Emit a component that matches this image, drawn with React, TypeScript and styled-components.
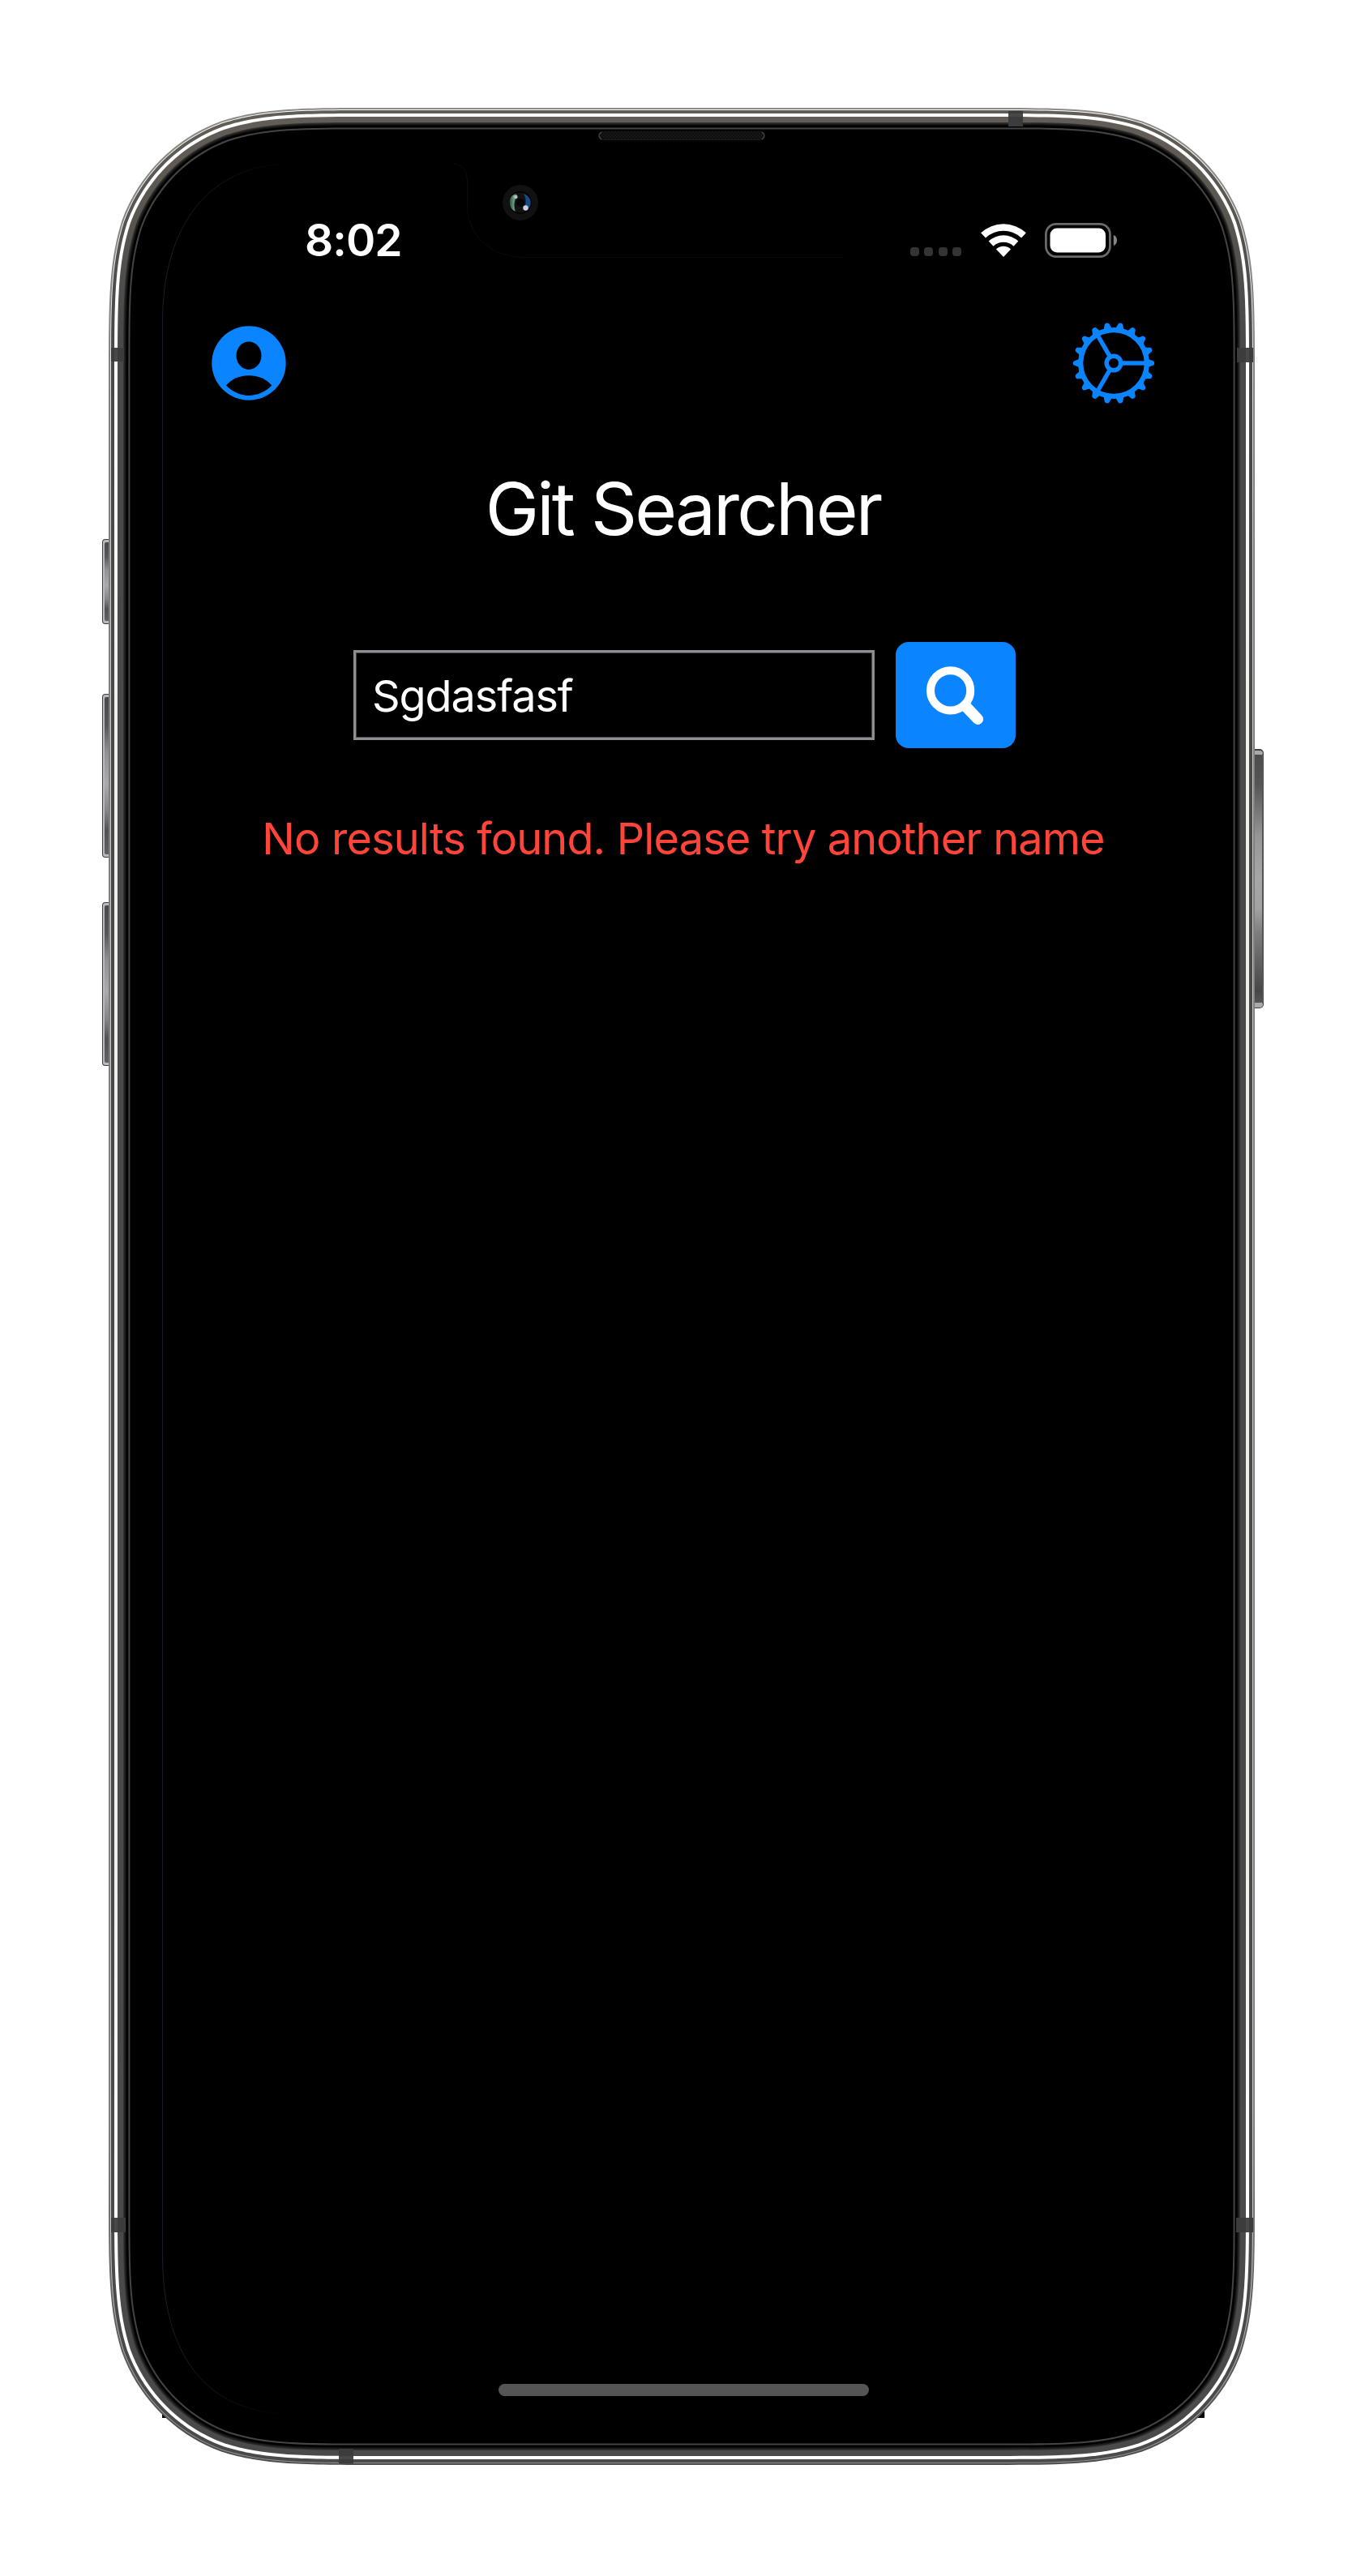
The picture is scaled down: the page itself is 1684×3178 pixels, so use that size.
import React from "react";
import styled, { createGlobalStyle } from "styled-components";

const BLUE = "#0a84ff";

const GlobalStyle = createGlobalStyle`
  html, body { margin: 0; padding: 0; background: #ffffff; }
  * { box-sizing: border-box; }
`;

const Stage = styled.main`
  display: grid;
  width: 1684px;
  height: 3178px;
  overflow: hidden;
  background: #ffffff;
  font-family: Inter, "Liberation Sans", sans-serif;
  & > * { grid-area: 1 / 1; }
`;

const Frame = styled.svg`
  display: block;
`;

const Screen = styled.section`
  z-index: 1;
  display: flex;
  flex-direction: column;
  width: 1286px;
  margin: 262px 0 0 200px;
  height: 2721px;
`;

const StatusBar = styled.div`
  display: flex;
  align-items: center;
  justify-content: space-between;
  height: 69px;
  padding: 0 107px 0 176px;
`;

const Clock = styled.span`
  color: #ffffff;
  font-size: 55px;
  font-weight: 600;
  line-height: 69px;
  letter-spacing: -0.9px;
`;

const StatusIcons = styled.div`
  display: flex;
  align-items: center;
  gap: 23px;
`;

const Dots = styled.div`
  display: flex;
  gap: 6.4px;
  margin-right: 1px;
  padding-top: 28px;
`;

const Dot = styled.i`
  width: 11px;
  height: 11px;
  border-radius: 4px;
  background: #343434;
`;

const Toolbar = styled.nav`
  display: flex;
  align-items: center;
  justify-content: space-between;
  height: 104px;
  margin-top: 65px;
  padding: 0 60.4px 0 61px;
`;

const IconButton = styled.button`
  display: flex;
  padding: 0;
  border: 0;
  background: none;
`;

const Title = styled.h1`
  margin: 74px 0 0;
  padding-right: 1px;
  color: #ffffff;
  font-size: 89px;
  font-weight: 400;
  line-height: 108px;
  letter-spacing: -2.95px;
  text-align: center;
  white-space: nowrap;
`;

const SearchRow = styled.form`
  display: flex;
  align-items: center;
  gap: 26px;
  height: 131px;
  margin: 110px 0 0 236px;
`;

const SearchInput = styled.input`
  width: 643px;
  height: 111px;
  padding: 2px 0 0 20px;
  border: 3px solid #8e8e93;
  border-radius: 0;
  outline: none;
  background: #000000;
  box-shadow: inset 0 0 0 1px #47474a;
  color: #ffffff;
  font: 400 54px Inter, "Liberation Sans", sans-serif;
  letter-spacing: -1.1px;
`;

const SearchButton = styled.button`
  display: flex;
  align-items: center;
  justify-content: center;
  width: 148px;
  height: 131px;
  padding: 0;
  border: 0;
  border-radius: 16px;
  background: ${BLUE};
`;

const ErrorText = styled.p`
  margin: 80px 0 0;
  color: #ff453a;
  font-size: 54px;
  font-weight: 400;
  line-height: 64px;
  letter-spacing: -0.85px;
  text-align: center;
  white-space: nowrap;
`;

const HomeIndicator = styled.div`
  width: 457px;
  height: 15px;
  margin: auto auto 27px;
  border-radius: 8px;
  background: #555555;
`;

/* Continuous-curvature rounded rectangle, inset from the phone's outline. */
function shell(inset: number): string {
  const l = 134 + inset;
  const t = 133 + inset;
  const r = 1548 - inset;
  const b = 3041 - inset;
  const R = 220 - inset;
  const A = 1.52866 * R;
  const B = 1.08849 * R;
  const C = 0.86841 * R;
  const D = 0.63149 * R;
  const E = 0.07491 * R;
  const F = 0.37282 * R;
  const G = 0.16906 * R;
  return [
    `M${l + A} ${t}`,
    `L${r - A} ${t}`,
    `C${r - B} ${t} ${r - C} ${t} ${r - D} ${t + E}`,
    `C${r - F} ${t + G} ${r - G} ${t + F} ${r - E} ${t + D}`,
    `C${r} ${t + C} ${r} ${t + B} ${r} ${t + A}`,
    `L${r} ${b - A}`,
    `C${r} ${b - B} ${r} ${b - C} ${r - E} ${b - D}`,
    `C${r - G} ${b - F} ${r - F} ${b - G} ${r - D} ${b - E}`,
    `C${r - C} ${b} ${r - B} ${b} ${r - A} ${b}`,
    `L${l + A} ${b}`,
    `C${l + B} ${b} ${l + C} ${b} ${l + D} ${b - E}`,
    `C${l + F} ${b - G} ${l + G} ${b - F} ${l + E} ${b - D}`,
    `C${l} ${b - C} ${l} ${b - B} ${l} ${b - A}`,
    `L${l} ${t + A}`,
    `C${l} ${t + B} ${l} ${t + C} ${l + E} ${t + D}`,
    `C${l + G} ${t + F} ${l + F} ${t + G} ${l + D} ${t + E}`,
    `C${l + C} ${t} ${l + B} ${t} ${l + A} ${t}Z`,
  ].join(" ");
}

const layers: [number, string][] = [
  [0, "url(#rim)"],
  [2, "url(#glint)"],
  [3, "url(#steel)"],
  [7, "url(#shine)"],
  [11, "url(#steel)"],
  [18, "#343331"],
  [19, "#262625"],
  [20, "#181818"],
  [21, "#0c0c0c"],
  [22, "#000000"],
  [24.4, "#444444"],
  [26.4, "#000000"],
];

const bands: [number, number, number, number][] = [
  [137, 429, 16, 17],
  [1526, 429, 20, 18],
  [137, 2736, 18, 18],
  [1525, 2736, 21, 18],
  [1244, 137, 18, 19],
  [418, 3021, 18, 18],
];

const sideKeys: [number, number][] = [
  [665, 105],
  [856, 202],
  [1113, 202],
];

function PhoneFrame() {
  return (
    <Frame width="1684" height="3178" viewBox="0 0 1684 3178" aria-hidden="true">
      <defs>
        <linearGradient id="rim" x1="0" y1="0" x2="0" y2="1">
          <stop offset="0" stopColor="#8b8a89" />
          <stop offset="0.15" stopColor="#7d8080" />
          <stop offset="0.85" stopColor="#7d8080" />
          <stop offset="1" stopColor="#4c4c4c" />
        </linearGradient>
        <linearGradient id="glint" x1="0" y1="0" x2="0" y2="1">
          <stop offset="0" stopColor="#ffffff" />
          <stop offset="0.2" stopColor="#c9cac8" />
          <stop offset="0.9" stopColor="#c9cac8" />
          <stop offset="1" stopColor="#8c8c8c" />
        </linearGradient>
        <linearGradient id="steel" x1="0" y1="0" x2="0" y2="1">
          <stop offset="0" stopColor="#635d57" />
          <stop offset="0.04" stopColor="#5a5650" />
          <stop offset="0.09" stopColor="#494949" />
          <stop offset="1" stopColor="#4a4a4a" />
        </linearGradient>
        <linearGradient id="shine" x1="0" y1="0" x2="0" y2="1">
          <stop offset="0" stopColor="#ffffff" />
          <stop offset="0.12" stopColor="#ffffff" />
          <stop offset="0.25" stopColor="#f0efea" />
          <stop offset="0.75" stopColor="#f0efea" />
          <stop offset="0.9" stopColor="#ffffff" />
        </linearGradient>
        <linearGradient id="key" x1="0" y1="0" x2="0" y2="1">
          <stop offset="0" stopColor="#48494c" />
          <stop offset="0.18" stopColor="#55565a" />
          <stop offset="0.35" stopColor="#909194" />
          <stop offset="0.55" stopColor="#a9aaad" />
          <stop offset="0.72" stopColor="#85868a" />
          <stop offset="0.85" stopColor="#505154" />
          <stop offset="1" stopColor="#606164" />
        </linearGradient>
        <linearGradient id="power" x1="0" y1="0" x2="0" y2="1">
          <stop offset="0" stopColor="#4c4c4c" />
          <stop offset="0.12" stopColor="#555555" />
          <stop offset="0.33" stopColor="#979797" />
          <stop offset="0.5" stopColor="#a6a6a6" />
          <stop offset="0.62" stopColor="#a2a2a2" />
          <stop offset="0.72" stopColor="#7d7d7d" />
          <stop offset="0.95" stopColor="#474747" />
          <stop offset="1" stopColor="#555555" />
        </linearGradient>
        <linearGradient id="edge" gradientUnits="userSpaceOnUse" x1="200" y1="0" x2="360" y2="0">
          <stop offset="0" stopColor="#1c1d2a" />
          <stop offset="0.4" stopColor="#131419" />
          <stop offset="1" stopColor="#000000" />
        </linearGradient>
        <linearGradient id="green" x1="0" y1="0" x2="1" y2="0">
          <stop offset="0" stopColor="#25493a" />
          <stop offset="0.5" stopColor="#6f9b83" />
          <stop offset="1" stopColor="#1a2e26" />
        </linearGradient>
        <pattern id="mesh" width="4" height="4" patternUnits="userSpaceOnUse">
          <rect width="4" height="4" fill="#0d0d0d" />
          <path d="M0 0h2v2h2v2h-2v-2h-2z" fill="#181818" />
        </pattern>
      </defs>

      {sideKeys.map(([y, h]) => (
        <g key={y}>
          <rect x="126" y={y} width="14" height={h} rx="4" fill="#3e3f3f" />
          <rect x="127" y={y + 1} width="12" height={h - 2} rx="3" fill="#b9bab9" />
          <rect x="129" y={y + 4} width="10" height={h - 8} rx="2" fill="url(#key)" />
        </g>
      ))}
      <rect x="1542" y="924" width="17" height="320" rx="5" fill="#424342" />
      <rect x="1542" y="926" width="16" height="317" rx="4" fill="#a8a9a8" />
      <rect x="1542" y="931" width="15.500" height="306" rx="2" fill="url(#power)" />
      <rect x="1557" y="930" width="2" height="308" fill="#555555" />

      <path d="M200 2970h10v13h-10zM1476 2970h10v13h-10z" fill="#000000" />
      {layers.map(([inset, fill]) => (
        <path key={inset} d={shell(inset)} fill={fill} />
      ))}
      {bands.map(([x, y, w, h]) => (
        <rect key={`${x}-${y}`} x={x} y={y} width={w} height={h} fill="#3c3c3c" />
      ))}
      <path d="M141 429h4v17h-4zM141 2736h4v18h-4zM1537 429h4v18h-4zM1537 2736h4v18h-4zM1244 140h18v4h-18zM418 3030h18v4h-18z" fill="#484848" />

      <path
        d="M360 202C260 202 200 275 200.500 400V2780C200 2900 250 2978 360 2978"
        fill="none"
        stroke="url(#edge)"
        strokeWidth="1"
      />
      <path
        d="M560 202Q576 204 576.500 222V252C576 290 605 317 646 317.500H1040"
        fill="none"
        stroke="#0b0b0b"
        strokeWidth="1"
      />

      <rect x="738.500" y="162" width="205" height="10.500" rx="5.250" fill="url(#mesh)" stroke="#171717" />
      <path d="M742 163Q736 167.500 742 172M940 163Q946 167.500 940 172" fill="none" stroke="#484848" strokeWidth="1.200" />

      <circle cx="642" cy="250" r="22" fill="#111111" />
      <circle cx="642" cy="250" r="14" fill="#030303" />
      <circle cx="642" cy="250" r="12.500" fill="#131112" />
      <path d="M637 239C626 241 626 257 636 261C633 253 635 245 639 242Z" fill="url(#green)" />
      <path d="M646 239C657 243 657 255 649 260C645 257 652 249 646 239Z" fill="#174a88" />
      <circle cx="642" cy="250" r="5" fill="#050505" />
      <circle cx="636.300" cy="243" r="2.300" fill="#b4c3bc" />
      <circle cx="648.500" cy="256.500" r="3.200" fill="#cfcfe2" />
    </Frame>
  );
}

function wedge(outer: number, inner: number): string {
  const k = 0.685;
  const c = 0.7285;
  const p = (r: number, side: number) => `${28 + side * r * k} ${41 - r * c}`;
  if (inner === 0) return `M28 41L${p(outer, -1)}A${outer} ${outer} 0 0 1 ${p(outer, 1)}Z`;
  return `M${p(outer, -1)}A${outer} ${outer} 0 0 1 ${p(outer, 1)}L${p(inner, 1)}A${inner} ${inner} 0 0 0 ${p(inner, -1)}Z`;
}

function WifiIcon() {
  return (
    <svg width="56" height="42" viewBox="0 0 56 42" fill="#ffffff">
      <path d={wedge(40.7, 32.2)} />
      <path d={wedge(26.7, 18.3)} />
      <path d={wedge(13.2, 0)} />
    </svg>
  );
}

function BatteryIcon() {
  return (
    <svg width="90" height="43" viewBox="0 0 90 43">
      <rect x="1.400" y="1.400" width="79" height="40.200" rx="12.500" fill="none" stroke="#6b6b6b" strokeWidth="2.700" />
      <rect x="6.500" y="6.500" width="68.500" height="30" rx="8.500" fill="#ffffff" />
      <path d="M84.800 15C90.500 17 90.500 26 84.800 28Z" fill="#858585" />
    </svg>
  );
}

function ProfileIcon() {
  return (
    <svg width="92" height="92" viewBox="0 0 92 92">
      <circle cx="46" cy="46" r="45.700" fill={BLUE} />
      <ellipse cx="46" cy="36.700" rx="15.500" ry="17.200" fill="#000000" />
      <path d="M18 73.500C31 57 61 57 74.300 73.500C58 90 34 90 18 73.500Z" fill="#000000" />
    </svg>
  );
}

function GearIcon() {
  const teeth = Array.from({ length: 18 }, (_, i) => i * 20);
  return (
    <svg width="104" height="104" viewBox="-52 -52 104 104">
      <g fill={BLUE}>
        {teeth.map((a) => (
          <path
            key={a}
            transform={`rotate(${a})`}
            d="M41 -6.500L44 -4.600L49.200 -2.600Q51.200 0 49.200 2.600L44 4.600L41 6.500Z"
          />
        ))}
      </g>
      <circle r="40.800" fill="none" stroke={BLUE} strokeWidth="6.200" />
      <circle r="8.800" fill="none" stroke={BLUE} strokeWidth="5.400" />
      {[0, 120, 240].map((a) => (
        <path key={a} transform={`rotate(${a})`} d="M10.500 0H39" stroke={BLUE} strokeWidth="5.400" />
      ))}
    </svg>
  );
}

function SearchIcon() {
  return (
    <svg width="148" height="131" viewBox="0 0 148 131" fill="none" stroke="#ffffff">
      <circle cx="67.600" cy="59.900" r="24.600" strokeWidth="10" />
      <path d="M86 79L101.300 95.200" strokeWidth="13.500" strokeLinecap="round" />
    </svg>
  );
}

export default function App() {
  return (
    <>
      <GlobalStyle />
      <Stage>
        <PhoneFrame />
        <Screen>
          <StatusBar>
            <Clock>8:02</Clock>
            <StatusIcons>
              <Dots>
                <Dot />
                <Dot />
                <Dot />
                <Dot />
              </Dots>
              <WifiIcon />
              <BatteryIcon />
            </StatusIcons>
          </StatusBar>
          <Toolbar>
            <IconButton aria-label="Profile">
              <ProfileIcon />
            </IconButton>
            <IconButton aria-label="Settings">
              <GearIcon />
            </IconButton>
          </Toolbar>
          <Title>Git Searcher</Title>
          <SearchRow>
            <SearchInput defaultValue="Sgdasfasf" spellCheck={false} />
            <SearchButton type="button" aria-label="Search">
              <SearchIcon />
            </SearchButton>
          </SearchRow>
          <ErrorText>No results found. Please try another name</ErrorText>
          <HomeIndicator />
        </Screen>
      </Stage>
    </>
  );
}
